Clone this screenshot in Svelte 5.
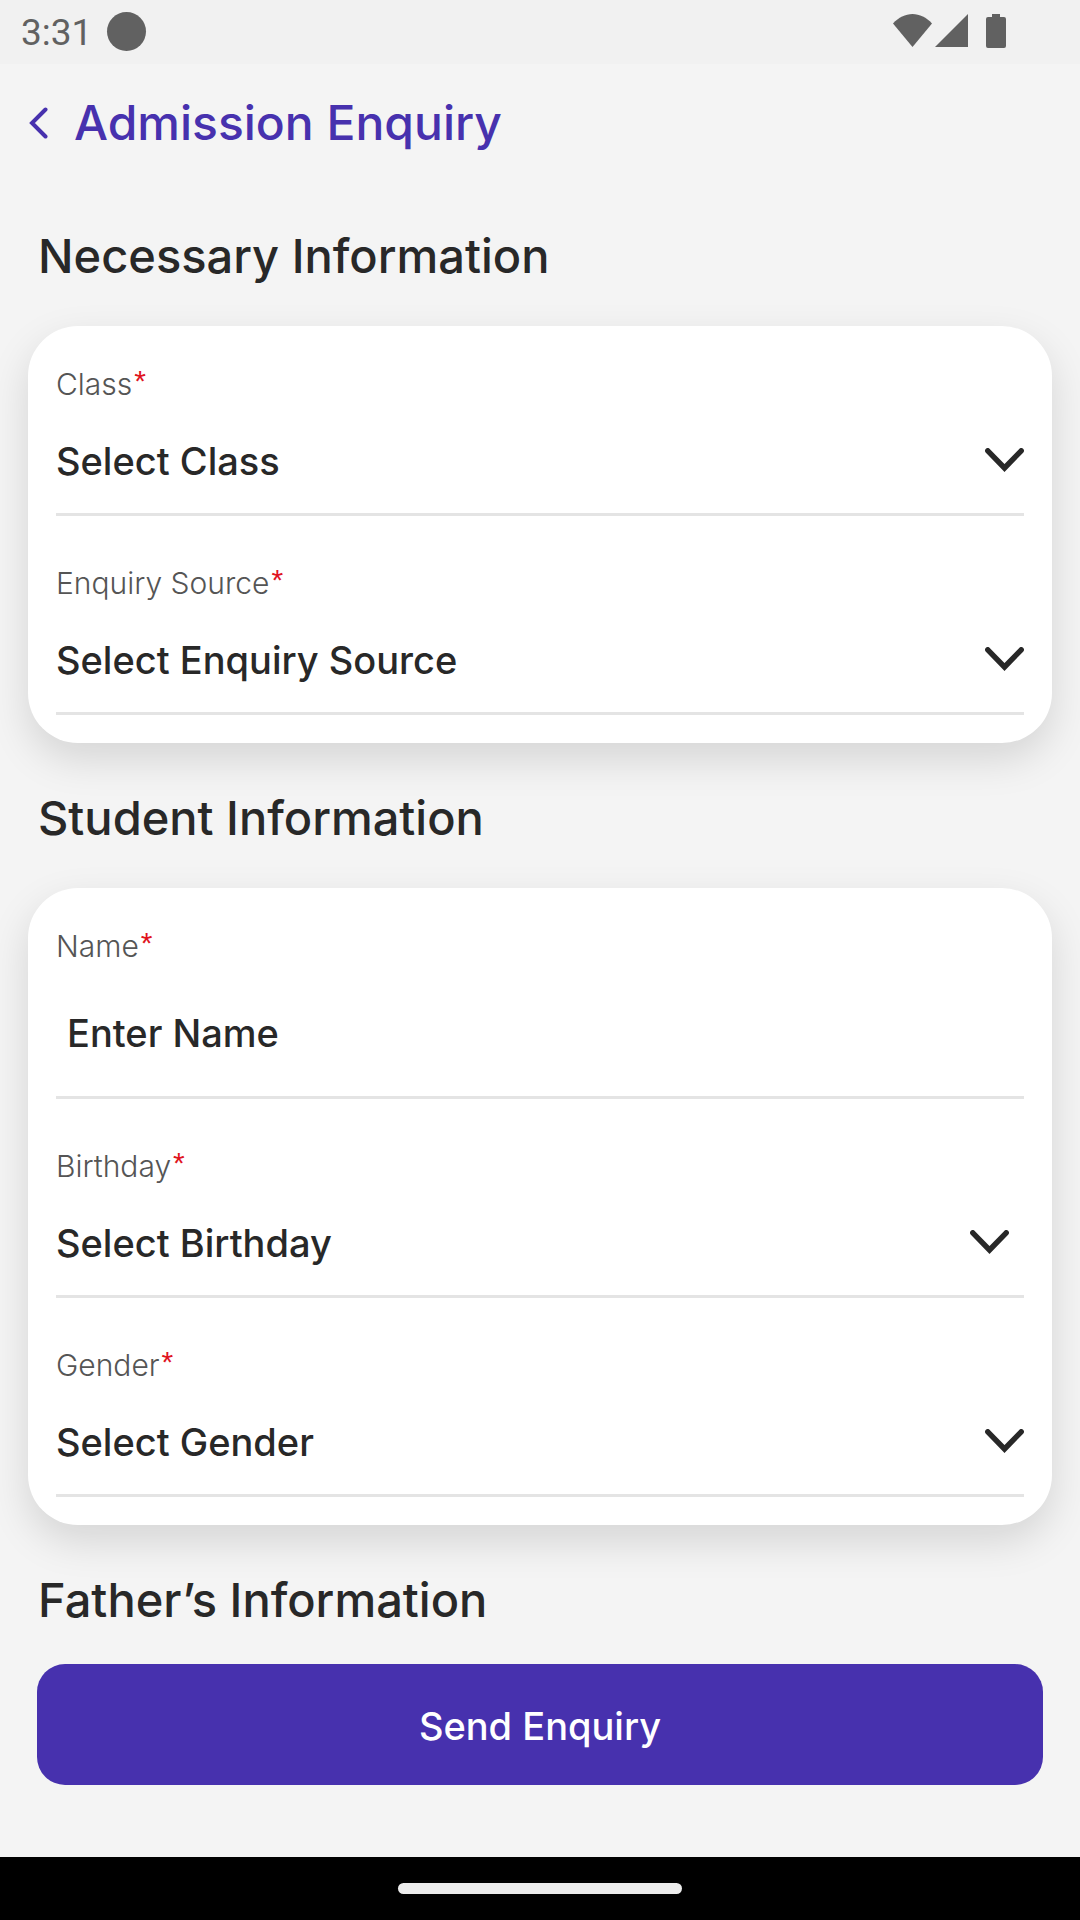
<script>
  let enquiry = $state({
    classId: '',
    source: '',
    name: '',
    gender: '',
  });

  const classes = ['Nursery', 'LKG', 'UKG', 'Class 1', 'Class 2', 'Class 3'];
  const sources = ['Website', 'Newspaper', 'Friend', 'Other'];
  const genders = ['Male', 'Female', 'Other'];

  function submit(e) {
    e.preventDefault();
  }
</script>

{#snippet chevron()}
  <svg class="chevron" width="39" height="24" viewBox="0 0 39 24" fill="none" stroke="currentColor" stroke-width="5.4" stroke-linecap="round" aria-hidden="true">
    <path d="M2.8 2.8 19.5 20 36.2 2.8"/>
  </svg>
{/snippet}

{#snippet fieldLabel(id, text)}
  <label for={id}>{text}<span class="required">*</span></label>
{/snippet}

{#snippet selectField(id, text, placeholder, options, key)}
  <div class="field">
    {@render fieldLabel(id, text)}
    <div class="control">
      <select {id} bind:value={enquiry[key]}>
        <option value="">{placeholder}</option>
        {#each options as option}
          <option value={option}>{option}</option>
        {/each}
      </select>
      {@render chevron()}
    </div>
  </div>
{/snippet}

<div class="screen">
  <div class="status-bar">
    <span class="clock">3:31</span>
    <span class="dot"></span>
    <div class="status-icons">
      <svg width="40" height="34" viewBox="0 0 40 34" fill="currentColor">
        <path d="M0 9.5C5.5 3.5 12.5 0 19.5 0S33.5 3.5 39 9.5L19.5 33Z"/>
      </svg>
      <svg width="33" height="34" viewBox="0 0 33 34" fill="currentColor">
        <path d="M33 0V33H0Z"/>
      </svg>
      <svg class="battery" width="20" height="34" viewBox="0 0 20 34" fill="currentColor">
        <path d="M6 0h8v3h4a2 2 0 0 1 2 2v27a2 2 0 0 1-2 2H2a2 2 0 0 1-2-2V5a2 2 0 0 1 2-2h4z"/>
      </svg>
    </div>
  </div>

  <header>
    <button class="back" type="button" aria-label="Back">
      <svg width="19" height="32" viewBox="0 0 19 32" fill="none" stroke="currentColor" stroke-width="4" stroke-linecap="round">
        <path d="M16.5 2.5 3 16 16.5 29.5"/>
      </svg>
    </button>
    <h1>Admission Enquiry</h1>
  </header>

  <form onsubmit={submit}>
    <h2>Necessary Information</h2>
    <section class="card">
      {@render selectField('class', 'Class', 'Select Class', classes, 'classId')}
      {@render selectField('source', 'Enquiry Source', 'Select Enquiry Source', sources, 'source')}
    </section>

    <h2>Student Information</h2>
    <section class="card">
      <div class="field">
        {@render fieldLabel('name', 'Name')}
        <div class="control text">
          <input id="name" type="text" placeholder="Enter Name" bind:value={enquiry.name} />
        </div>
      </div>
      <div class="field">
        {@render fieldLabel('birthday', 'Birthday')}
        <div class="control date">
          <button id="birthday" type="button">Select Birthday</button>
          {@render chevron()}
        </div>
      </div>
      {@render selectField('gender', 'Gender', 'Select Gender', genders, 'gender')}
    </section>

    <h2>Father’s Information</h2>
    <div class="actions">
      <button class="send" type="submit">Send Enquiry</button>
    </div>
  </form>

  <div class="nav-bar">
    <span class="handle"></span>
  </div>
</div>

<style>
  :global(body) {
    margin: 0;
    background: #f4f4f4;
  }

  .screen {
    min-height: 100vh;
    display: flex;
    flex-direction: column;
    background: #f4f4f4;
    color: #282828;
    font-family: Inter, "Liberation Sans", sans-serif;
  }

  .status-bar {
    display: flex;
    align-items: center;
    height: 64px;
    padding: 0 74px 2px 21px;
    background: #f1f1f1;
    color: #616161;
    box-sizing: border-box;
  }

  .clock {
    font-family: Roboto, sans-serif;
    font-size: 37px;
    line-height: 44px;
    padding-top: 4px;
  }

  .dot {
    width: 39px;
    height: 39px;
    margin-left: 15px;
    border-radius: 50%;
    background: #616161;
  }

  .status-icons {
    display: flex;
    gap: 2px;
    margin-left: auto;
  }

  .battery {
    margin-left: 16px;
  }

  header {
    display: flex;
    align-items: center;
    gap: 26px;
    height: 117px;
    padding: 0 29px;
    color: #4731ae;
  }

  .back {
    display: flex;
    padding: 0;
    border: none;
    background: none;
    color: inherit;
    cursor: pointer;
  }

  h1,
  h2 {
    margin: 0;
    font-size: 47px;
    line-height: 56px;
    font-weight: 500;
  }

  h1 {
    font-size: 48px;
  }

  form {
    flex: 1;
    display: flex;
    flex-direction: column;
    padding: 0 28px;
  }

  h2 {
    padding: 47px 10px 42px;
  }

  h2:last-of-type {
    padding-bottom: 36px;
  }

  .card {
    padding: 0 28px 28px;
    background: #fff;
    border-radius: 50px;
    box-shadow: 0 16px 40px rgba(0, 0, 0, 0.13);
  }

  .field {
    padding-top: 48px;
    border-bottom: 3px solid #e4e4e4;
  }

  .field:first-child {
    padding-top: 39px;
  }

  label {
    display: flex;
    align-items: flex-start;
    gap: 2px;
    font-size: 30px;
    line-height: 38px;
    font-weight: 300;
    color: #555;
  }

  .required {
    color: #e0141e;
    font-family: "Liberation Sans", Arial, sans-serif;
    line-height: 32px;
  }

  .control {
    display: flex;
    align-items: center;
    height: 110px;
    padding-top: 3px;
    box-sizing: border-box;
  }

  .control.text {
    height: 131px;
    padding-left: 11px;
  }

  .control.date {
    padding-right: 15px;
  }

  select,
  input,
  .control button {
    flex: 1;
    min-width: 0;
    padding: 2px 0 0;
    border: none;
    outline: none;
    background: none;
    appearance: none;
    color: inherit;
    font-family: inherit;
    font-size: 38px;
    line-height: 48px;
    font-weight: 500;
    text-align: left;
  }

  input::placeholder {
    color: inherit;
    opacity: 1;
  }

  .chevron {
    flex: none;
    pointer-events: none;
  }

  .actions {
    padding: 0 9px 72px;
  }

  .send {
    display: block;
    width: 100%;
    height: 121px;
    padding: 2px 0 0;
    border: none;
    border-radius: 28px;
    background: #4731ae;
    color: #fff;
    font-family: inherit;
    font-size: 38px;
    font-weight: 500;
    cursor: pointer;
  }

  .nav-bar {
    display: flex;
    align-items: center;
    justify-content: center;
    height: 63px;
    background: #000;
  }

  .handle {
    width: 284px;
    height: 11px;
    border-radius: 6px;
    background: #ececec;
  }
</style>
